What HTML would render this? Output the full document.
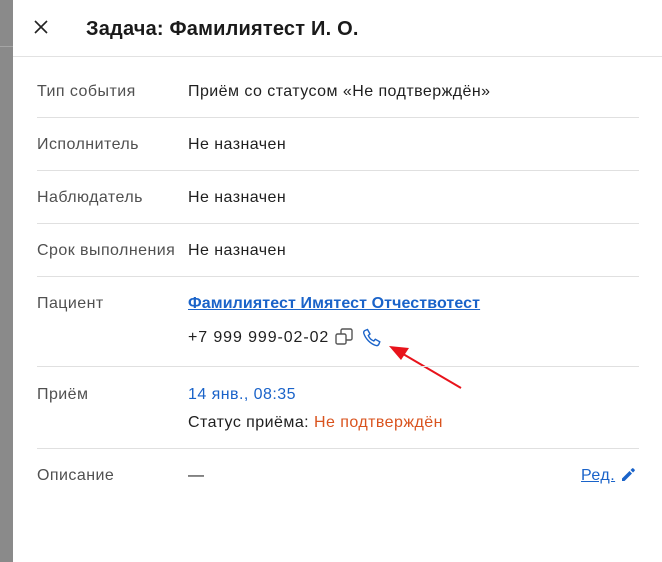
<!DOCTYPE html>
<html><head><meta charset="utf-8"><style>
body{margin:0;width:662px;height:562px;position:relative;overflow:hidden;background:#fff;font-family:"Liberation Sans",Arial,sans-serif;color:#1f1f1f}
.strip{position:absolute;left:0;top:0;width:13px;height:562px;background:#8a8a8a}
.strip:after{content:"";position:absolute;left:0;top:46px;width:13px;height:1px;background:#a5a5a5}
.hl{position:absolute;left:13px;right:0;top:56px;height:1px;background:#e2e2e2}
.l{position:absolute;left:37px;width:602px;height:1px;background:#e0e0e0}
.t{position:absolute;font-size:16px;line-height:18px;white-space:nowrap;letter-spacing:0.45px}
.lab{left:37px;color:#505050}
.v{left:188px;color:#1f1f1f}
a{color:#1a63c9}
</style></head><body>
<div class="strip"></div>
<svg style="position:absolute;left:33px;top:19px" width="16" height="16" viewBox="0 0 16 16"><path d="M2 2L14 14M14 2L2 14" stroke="#222" stroke-width="1.6"/></svg>
<div class="t" style="left:86px;top:18px;font-size:20px;line-height:22px;font-weight:bold;color:#1a1a1a;letter-spacing:0.2px">Задача: Фамилиятест И. О.</div>
<div class="hl"></div>
<div class="t lab" style="top:83px">Тип события</div><div class="t v" style="top:83px">Приём со статусом «Не подтверждён»</div>
<div class="l" style="top:117px"></div>
<div class="t lab" style="top:136px">Исполнитель</div><div class="t v" style="top:136px">Не назначен</div>
<div class="l" style="top:170px"></div>
<div class="t lab" style="top:189px">Наблюдатель</div><div class="t v" style="top:189px">Не назначен</div>
<div class="l" style="top:223px"></div>
<div class="t lab" style="top:242px">Срок выполнения</div><div class="t v" style="top:242px">Не назначен</div>
<div class="l" style="top:276px"></div>
<div class="t lab" style="top:295px">Пациент</div>
<div class="t v" style="top:295px;font-weight:bold;letter-spacing:0.1px"><a style="text-decoration:underline">Фамилиятест Имятест Отчествотест</a></div>
<div class="t v" style="top:329px;letter-spacing:0.9px">+7 999 999-02-02</div>
<svg style="position:absolute;left:335px;top:328px" width="18" height="18" viewBox="0 0 18 18" fill="none" stroke="#555" stroke-width="1.4"><rect x="1" y="6" width="10" height="10" rx="1.5"/><path d="M6 6V2.5A1.5 1.5 0 0 1 7.5 1H15.5A1.5 1.5 0 0 1 17 2.5V10.5A1.5 1.5 0 0 1 15.5 12H11"/></svg>
<svg style="position:absolute;left:362px;top:328px" width="20" height="19" viewBox="0 0 20 19" fill="none" stroke="#1a63c9" stroke-width="1.4"><path d="M3 2.5L5.5 1.5L8 6L6.3 7.5C7.3 10 9.3 12 11.8 13L13.3 11.3L17.8 13.8L16.8 16.3C16.3 17.3 15.2 17.8 14 17.5C8.5 15.8 3.5 10.8 1.8 5.3C1.5 4.1 2 3 3 2.5Z"/></svg>
<svg style="position:absolute;left:380px;top:338px" width="90" height="60"><path d="M81 50L18 13" stroke="#e8131b" stroke-width="2"/><path d="M9 8L29 10L21 22Z" fill="#e8131b"/></svg>
<div class="l" style="top:366px"></div>
<div class="t lab" style="top:386px">Приём</div>
<div class="t v" style="top:386px;color:#1a63c9">14 янв., 08:35</div>
<div class="t v" style="top:414px">Статус приёма: <span style="color:#d9531e">Не подтверждён</span></div>
<div class="l" style="top:448px"></div>
<div class="t lab" style="top:467px">Описание</div>
<div class="t v" style="top:467px">—</div>
<div class="t" style="left:581px;top:467px"><a style="text-decoration:underline">Ред.</a></div>
<svg style="position:absolute;left:621px;top:467px" width="15" height="15" viewBox="0 0 15 15"><path d="M1 11.5V14H3.5L11 6.5L8.5 4Z M9.5 3L12 5.5L13.5 4C14 3.5 14 3 13.5 2.5L12.5 1.5C12 1 11.5 1 11 1.5Z" fill="#1a63c9"/></svg>
</body></html>
